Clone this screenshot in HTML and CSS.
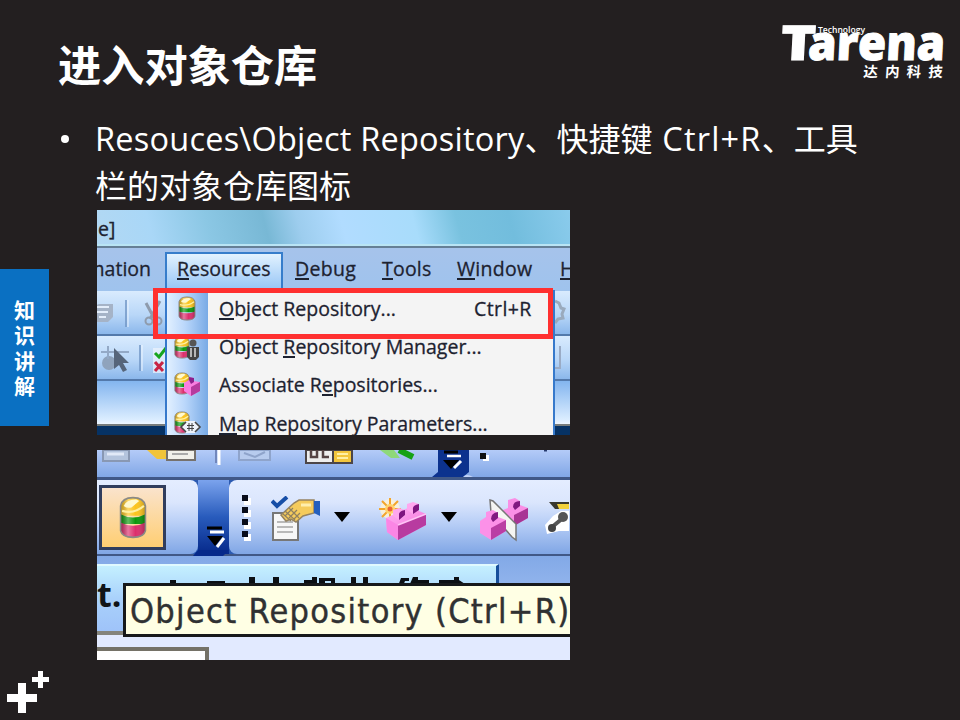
FILE: index.html
```html
<!DOCTYPE html>
<html lang="zh-CN">
<head>
<meta charset="utf-8">
<title>进入对象仓库</title>
<link rel="stylesheet" href="styles.css">
</head>
<body>
<svg class="defs" aria-hidden="true">
  <defs>
    <linearGradient id="shine" x1="0" x2="1" y1="0" y2="0">
      <stop offset="0" stop-color="#000" stop-opacity=".25"/>
      <stop offset=".3" stop-color="#fff" stop-opacity=".35"/>
      <stop offset=".6" stop-color="#fff" stop-opacity="0"/>
      <stop offset="1" stop-color="#000" stop-opacity=".25"/>
    </linearGradient>
    <linearGradient id="pink" x1="0" x2="1" y1="0" y2="1">
      <stop offset="0" stop-color="#ffb0f4"/>
      <stop offset="1" stop-color="#f46fd8"/>
    </linearGradient>
    <symbol id="repo" viewBox="0 0 18 26" preserveAspectRatio="none">
      <path d="M1 6Q2 1 9 1T17 6V12H1z" fill="#fcc41c"/>
      <path d="M1 11Q9 15 17 11V17H1z" fill="#0c980c"/>
      <path d="M1 16Q9 20 17 16V21Q16 25 9 25T1 21z" fill="#dc2e6c"/>
      <path d="M1 6Q2 1 9 1T17 6V21Q16 25 9 25T1 21z" fill="url(#shine)" stroke="#8b8a86" stroke-width="1"/>
      <path d="M3 6Q5 2 11 2L13 3L8 7Q5 7.500 3 6z" fill="#fff9cf"/>
      <path d="M2 9Q10 11 16 6" fill="none" stroke="#fff0a0" stroke-width="1.300"/>
    </symbol>
    <symbol id="brick" viewBox="0 0 42 40">
      <path d="M1 16L25 5L41 12V23L13 38L2 30z" fill="url(#pink)"/>
      <path d="M13 23L41 12V23L13 38z" fill="#b83ba0"/>
      <path d="M1 16L13 23V38L2 30z" fill="#fb86e5"/>
      <path d="M8 14V8L14 6L20 8V14L14 18z" fill="#ffa7ef"/>
      <path d="M14 14Q13 9 20 8V13L14 18z" fill="#7f1680"/>
      <path d="M22 8V2L28 0L34 2V8L28 12z" fill="#ffa7ef"/>
      <path d="M28 8Q27 3 34 2V8L28 12z" fill="#7f1680"/>
      <path d="M13 23L41 12" stroke="#ffc4f6" stroke-width="1.500"/>
    </symbol>
  </defs>
</svg>
<div class="slide">
  <header class="head">
    <h1>进入对象仓库</h1>
    <svg class="logo" viewBox="0 0 170 60" role="img">
      <g transform="translate(7 40) skewX(-3)">
        <text class="logo-name" x="-2" y="0" textLength="35" lengthAdjust="spacingAndGlyphs">T</text>
        <text class="logo-name" x="25.500" y="0" textLength="137" lengthAdjust="spacingAndGlyphs">arena</text>
      </g>
      <text class="logo-tag" x="43" y="12.500" textLength="47" lengthAdjust="spacingAndGlyphs">Technology</text>
      <g transform="translate(88 57) skewX(-4)">
        <text class="logo-cn" x="0" y="0">达内科技</text>
      </g>
    </svg>
  </header>

  <aside class="tag"><span>知</span><span>识</span><span>讲</span><span>解</span></aside>

  <main class="content">
    <ul class="points">
      <li><span class="en">Resouces\Object Repository</span>、快捷键<span class="keys"> Ctrl+R</span>、工具栏的对象仓库图标</li>
    </ul>

    <section class="shot shot-menu">
      <div class="titlebar">e]</div>
      <nav class="menubar">
        <span class="m-auto">mation</span>
        <span class="m-res"><u>R</u>esources</span>
        <span class="m-debug"><u>D</u>ebug</span>
        <span class="m-tools"><u>T</u>ools</span>
        <span class="m-window"><u>W</u>indow</span>
        <span><u>H</u></span>
      </nav>
      <div class="strip">
        <svg width="473" height="44" viewBox="0 0 473 44">
          <path d="M-3 15L2 13H16V26L11 31H-3z" fill="#a5b3c7"/><path d="M0 16H12M0 21H11M2 26H9" stroke="#e4eefb" stroke-width="2"/><path d="M29 9V36" stroke="#6f94c4" stroke-width="1.500"/><path d="M31 9V36" stroke="#eef6ff"/>
          <path d="M49 12L57 27M63 10L53 28" stroke="#8f9bac" stroke-width="3"/><circle cx="52" cy="30" r="3.500" fill="none" stroke="#8f9bac" stroke-width="2"/><circle cx="61" cy="30" r="3.500" fill="none" stroke="#8f9bac" stroke-width="2"/>
          <path d="M458 10l4 2 2 5 3 1-2 5 1 4-5 1-3 4" fill="none" stroke="#9aaabd" stroke-width="3"/>
        </svg>
      </div>
      <div class="strip">
        <svg width="473" height="44" viewBox="0 0 473 44">
          <circle cx="12" cy="27" r="7" fill="#8fa3bc"/><path d="M4 16H32M11 10V23" stroke="#93a9c6" stroke-width="2"/><path d="M17 12V33L22 29L26 36L30 34L26 27H32z" fill="#56657a"/><path d="M43 9V35" stroke="#6f94c4" stroke-width="1.500"/><path d="M45 9V35" stroke="#eef6ff"/>
          <path d="M56 12H70V37H56z" fill="#eef4fc" opacity=".7"/><path d="M58 17L62 21L69 12" fill="none" stroke="#18a51e" stroke-width="3"/><path d="M58 26L66 35M66 26L58 35" stroke="#c82445" stroke-width="3"/><path d="M463 10V32H457" fill="none" stroke="#9aabc5" stroke-width="2"/>
        </svg>
      </div>
      <div class="strip plain"></div>
      <div class="desk"></div>

      <div class="popup">
        <div class="item"><svg class="ic" viewBox="0 0 40 38"><use href="#repo" x="11" y="6" width="18" height="25"/></svg><span><u>O</u>bject Repository...</span><kbd>Ctrl+R</kbd></div>
        <div class="item"><svg class="ic" viewBox="0 0 40 38"><use href="#repo" x="7" y="8" width="16" height="23"/><circle cx="26" cy="15" r="3.500" fill="#555"/><path d="M20 19H32V29L29 32H23L20 29z" fill="#444"/><path d="M24 20V29M28 20V29" stroke="#ddd" stroke-width="1.500"/></svg><span>Object <u>R</u>epository Manager...</span></div>
        <div class="item"><svg class="ic" viewBox="0 0 40 38"><use href="#repo" x="7" y="6" width="16" height="23"/><path d="M17 17L22 14V11L26 12V15L33 16V25L24 30L17 25z" fill="#fa7ee0"/><path d="M24 21L33 16V25L24 30z" fill="#b63b9e"/><path d="M22 14V11L27 12V16L24 18z" fill="#8c218c"/></svg><span>Associate R<u>e</u>positories...</span></div>
        <div class="item"><svg class="ic" viewBox="0 0 40 38"><use href="#repo" x="7" y="6" width="16" height="23"/><path d="M14 22L19 16H28L33 22L28 28H19z" fill="#eef3fa"/><path d="M19 17L14 22L19 27M28 17L33 22L28 27" fill="none" stroke="#444" stroke-width="1.600"/><path d="M22 18V26M25 18V26M20 20.500H27M20 23.500H27" stroke="#444" stroke-width="1"/></svg><span><u>M</u>ap Repository Parameters...</span></div>
      </div>
      <div class="marker"></div>
    </section>

    <section class="shot shot-toolbar">
      <div class="bar-top">
        <svg width="473" height="27" viewBox="0 0 473 27">
          <path d="M6 0H32V11H6z" fill="#b4c4dd" stroke="#8998b3" stroke-width="2"/><path d="M10 4H27" stroke="#e1e9f7" stroke-width="3"/>
          <path d="M50 0H72V9H60z" fill="#f1c43a"/><path d="M70 0H98V10H70z" fill="#f1f0ea" stroke="#76716c" stroke-width="2"/><path d="M75 4H91" stroke="#aaa" stroke-width="2"/>
          <path d="M119 0V13" stroke="#7187bc" stroke-width="2"/><path d="M122 0V15" stroke="#fff" stroke-width="3"/>
          <path d="M142 0H173V10H142z" fill="#b7cbee" stroke="#8fa4cb" stroke-width="2"/><path d="M147 3L158 7L168 2" fill="none" stroke="#8fa4cb" stroke-width="2"/>
          <path d="M209 0H236V13H209z" fill="#eee" stroke="#4c4648" stroke-width="2"/><path d="M214 0V7H220V0M226 0V7H232" stroke="#544" stroke-width="2.500" fill="none"/><path d="M236 0H255V13H236z" fill="#f3c63c" stroke="#4c4648" stroke-width="2"/><path d="M240 4H251M240 8H251" stroke="#fff0a5" stroke-width="2"/>
          <path d="M283 0H297L303 8H294z" fill="#8ed879"/><path d="M302 0L316 7" stroke="#16a216" stroke-width="6"/>
          <path d="M341 0H372V22L366 27H335L341 22z" fill="#0c328e"/><path d="M347 2H361" stroke="#000" stroke-width="3"/><path d="M350 6H364" stroke="#fff" stroke-width="2.500"/><path d="M346 10H362L354 19z"/><path d="M357 18L364 11" stroke="#fff" stroke-width="3"/><path d="M365 29Q368 22 376 27z" fill="#c2d3f8"/>
          <path d="M386 5h6v6h-6z" fill="#fff"/><path d="M383 3h6v6h-6z" fill="#111"/><path d="M447 0H450" stroke="#263b70" stroke-width="3"/>
        </svg>
      </div>
      <div class="bar-main">
        <div class="group first"><span class="pressed"><svg width="28" height="43"><use href="#repo" width="28" height="43"/></svg></span></div>
        <div class="overflow"><svg width="31" height="76" viewBox="0 0 31 76"><path d="M9 48H24" stroke="#000" stroke-width="3"/><path d="M12 52H26" stroke="#fff" stroke-width="3"/><path d="M9 56H25L17 66z"/><path d="M19 67L26 58" stroke="#fff" stroke-width="3"/><path d="M-5 76L0 70H31L25 76z" fill="#06298a"/></svg></div>
        <div class="group rest">
          <svg class="grip" width="12" height="48" viewBox="0 0 12 48"><path d="M3 3h7v7H3zM3 15h7v7H3zM3 27h7v7H3zM3 39h7v7H3z" fill="#fff"/><path d="M1 0h6v6H1zM1 12h6v6H1zM1 24h6v6H1zM1 36h6v6H1z" fill="#080c1a"/></svg>
          <svg class="props" width="50" height="46" viewBox="0 0 50 46"><path d="M2 17H27V44H2z" fill="#f7f7f7" stroke="#777" stroke-width="2"/><path d="M6 26H22M6 31H22M6 36H22" stroke="#a5a5a5" stroke-width="1.500"/><path d="M10 19L23 7L28 4H43V17L32 20L25 26L20 23L15 25z" fill="#f5cb5c" stroke="#958361" stroke-width="1.500"/><path d="M12 18L20 25M14 15L24 24M18 12L28 22M14 20L22 12M18 22L26 14M23 23L29 17" stroke="#8f8060" stroke-width="1.200"/><path d="M30 9H40" stroke="#ffeeaf" stroke-width="3"/><path d="M43 5H49V20L43 17z" fill="#245fbd"/><path d="M1 5L6 10L16 1" fill="none" stroke="#164ea7" stroke-width="4"/></svg>
          <svg class="arrow" width="16" height="10" viewBox="0 0 16 10"><path d="M0 0H16L8 10z"/></svg>
          <svg class="newbrick" width="50" height="46" viewBox="0 0 50 46"><circle cx="12" cy="12" r="10" fill="#fff4d5" opacity=".8"/><g stroke="#f3a52c" stroke-width="2"><path d="M12 1V23M1 12H23M4 4L20 20M20 4L4 20"/></g><circle cx="12" cy="12" r="5" fill="#ffd36b"/><circle cx="12" cy="12" r="2.500" fill="#ec6634"/><use href="#brick" x="7" y="5" width="42" height="40"/></svg>
          <svg class="arrow" width="16" height="10" viewBox="0 0 16 10"><path d="M0 0H16L8 10z"/></svg>
          <svg class="split" width="50" height="46" viewBox="0 0 50 46"><path d="M24 13L29 11V3L36 1L41 4V8L49 11V21L34 29L24 22z" fill="#fa8fe6"/><path d="M35 18L49 11V21L35 29z" fill="#a83494"/><path d="M34 10Q34 4 41 4V9L36 13z" fill="#811880"/><path d="M11 3L14 4L37 27V43L33 40L12 16z" fill="#f5f5f2" stroke="#777" stroke-width="1.500"/><path d="M1 24L7 20V15L14 13L19 16V20L27 23V34L12 43L1 36z" fill="#fc91e8"/><path d="M12 31L27 23V34L12 43z" fill="#ba3ea4"/><path d="M12 22Q12 16 19 15V21L14 25z" fill="#811880"/></svg>
          <svg class="keytool" width="24" height="36" viewBox="0 0 24 36"><path d="M4 1H24V8H10z" fill="#39382e"/><path d="M12 3H24V8H14z" fill="#f2d13d"/><path d="M0 24L8 15L16 10H24V30H14L2 33z" fill="#fff"/><path d="M7 26L18 17" stroke="#555" stroke-width="4"/><circle cx="7" cy="27" r="4" fill="#444"/><circle cx="18" cy="16" r="5" fill="#555"/></svg>
        </div>
      </div>
      <div class="tabs">
        <div class="tab"><b>t.</b><svg class="hidden-label" width="320" height="9" viewBox="0 0 320 9"><path d="M20 3h6v3h-6zM57 4h18v5H57zM99 0h6v9h-6zM123 0h6v9h-6zM154 3h8V0h5v9h-13zM169 1h16v8h-4V4h-6v5h-6zM201 0h5v9h-5zM213 0h5v9h-5zM220 6h7v3h-7zM251 1h8v3h-4l-2 5h-5zM263 0h5v3h11v4h-16v2h-4zM289 3h20l9 6h-8l-4-3h-17zM304 0h5v5h-5z" fill="#0b0f14"/></svg></div>
      </div>
      <div class="pane"><div class="field"></div></div>
      <div class="tooltip">Object Repository (Ctrl+R)</div>
    </section>
  </main>

  <svg class="plus" width="44" height="44" viewBox="0 0 44 44"><path d="M11 12h8v11h11v8H19v11h-8V31H0v-8h11zM31 0h5v6h6v5h-6v6h-5v-6h-6V6h6z" fill="#fff"/></svg>
</div>
</body>
</html>
```
FILE: styles.css
```css
* { box-sizing: border-box; }
body { margin: 0; background: #231f20; }
.defs { position: absolute; width: 0; height: 0; }
svg { display: block; flex: none; }

.slide {
  position: relative;
  width: 960px;
  height: 720px;
  overflow: hidden;
  background: #231f20;
  color: #fff;
  font-family: "Open Sans", "Noto Sans CJK SC", sans-serif;
}

.head {
  display: flex;
  justify-content: space-between;
  height: 115px;
  padding: 20px 15px 0 58px;
}
h1 {
  margin: 12px 0 0;
  font: 700 43.200px/62px "Noto Sans CJK SC", sans-serif;
}
.logo { width: 170px; height: 60px; overflow: visible; }
.logo text { fill: #fff; }
.logo-name { font: 800 48px "Open Sans", sans-serif; stroke: #fff; stroke-width: 1px; }
.logo-tag { font: 600 9px "Open Sans", sans-serif; }
.logo-cn { font: 700 14.500px "Noto Sans CJK SC", sans-serif; letter-spacing: 7.200px; }

.tag {
  position: absolute;
  left: 0;
  top: 269px;
  width: 49px;
  height: 157px;
  display: flex;
  flex-direction: column;
  align-items: center;
  justify-content: center;
  background: #0a70c2;
  font: 700 21px/25.500px "Noto Sans CJK SC", sans-serif;
}

.content { padding-left: 97px; width: 900px; }
.points {
  margin: 0 0 0 -2px;
  padding: 0;
  height: 95px;
  list-style: none;
  font-size: 32px;
  line-height: 47px;
}
.points li { position: relative; width: 775px; }
.points li::before {
  content: "";
  position: absolute;
  left: -34px;
  top: 20px;
  width: 8px;
  height: 8px;
  border-radius: 50%;
  background: #fff;
}
.en { font-size: 32.500px; letter-spacing: .22px; }
.keys { font-size: 32.500px; letter-spacing: 1.200px; }

.shot { position: relative; width: 473px; overflow: hidden; color: #1d2230; }
.shot svg { filter: blur(.5px); }

.shot-menu {
  height: 225px;
  margin-bottom: 15px;
  font-size: 19.500px;
  letter-spacing: 0;
  -webkit-text-stroke: .3px #1d2230;
}
u { text-decoration: none; border-bottom: 2px solid currentColor; display: inline-block; line-height: 19px; }
.titlebar {
  height: 38px;
  padding-left: 1px;
  line-height: 38px;
  border-bottom: 2px solid #657f96;
  box-shadow: inset 0 -2px #b9e4f4;
  background: linear-gradient(75deg, #b2d8f3 0, #a9d7f7 12%, #8bc7e4 24%, #78b8d5 36%, #9dcdee 43%, #b1dcff 52%, #a8dcfb 67%, #79c2df 76%, #72bddd 87%, #8acbec 100%);
}
.menubar {
  display: flex;
  align-items: stretch;
  height: 43px;
  line-height: 42px;
  background: linear-gradient(#a6c3eb, #9fc3ed);
}
.menubar span { flex: none; }
.m-auto { width: 68px; direction: rtl; padding-right: 14px; overflow: hidden; white-space: nowrap; }
.m-res {
  width: 118px;
  margin: 4px 12px 0 0;
  padding-left: 10px;
  line-height: 30px;
  border: 2px solid #367dcb;
  border-bottom: 0;
  background: linear-gradient(#e2f2ff, #93c3f5);
}
.m-debug { width: 87px; letter-spacing: .3px; }
.m-tools { width: 75px; letter-spacing: .2px; }
.m-window { width: 103px; letter-spacing: .3px; }
.strip {
  height: 45px;
  border-bottom: 2px solid #5379ab;
  background: linear-gradient(#d9ebfe, #b9d7f8 55%, #8bb7eb);
}
.strip.plain { border-color: #777c7c; background: linear-gradient(#83b5ef, #dbedff 90%, #eef6ff); }
.desk { height: 9px; background: #063264; }

.popup {
  position: absolute;
  left: 68px;
  top: 80px;
  width: 390px;
  height: 170px;
  border: solid #3679cb;
  border-width: 0 2px;
  background: linear-gradient(90deg, #e2f0ff 0, #bad7fb 18px, #78aae5 41px, #f4f4f4 41px);
}
.item { display: flex; height: 38.200px; line-height: 38px; white-space: nowrap; }
.ic { width: 40px; height: 38px; margin-right: 12px; }
.item kbd { font: inherit; margin-left: 78px; letter-spacing: .4px; }
.marker {
  position: absolute;
  left: 56px;
  top: 78px;
  width: 400px;
  height: 51px;
  border: 5px solid #ff3030;
}

.shot-toolbar { height: 210px; background: #8fb2ea; }
.bar-top { height: 30px; border-bottom: 3px solid #405887; background: linear-gradient(#b4cbf8, #81a7e6); }
.bar-main { display: flex; height: 76px; border-bottom: 2px solid #405887; background: #2b5ab1; }
.group { display: flex; background: linear-gradient(#e4edff 0, #dbe6fd 30%, #b6cdf6 60%, #80a6e5 100%); }
.first { width: 101px; padding: 5px 0 0 2px; border-radius: 0 8px 8px 0; }
.pressed {
  display: grid;
  place-items: center;
  width: 67px;
  height: 65px;
  border: 3px solid #303d5d;
  background: linear-gradient(#fae3cc, #ffce72);
}
.overflow { width: 31px; background: linear-gradient(#7ba3ed, #285bbc 50%, #06298a); }
.overflow svg { overflow: visible; }
.rest { flex: 1; border-radius: 8px 0 0 8px; padding-left: 12px; }
.grip { margin-top: 15px; }
.props { margin: 16px 13px 0 18px; }
.arrow { margin-top: 32px; }
.newbrick { margin: 17px 13px 0 28px; }
.split { margin: 17px 16px 0 22px; }
.keytool { margin-top: 21px; }
.tabs { height: 79px; padding-top: 8px; background: linear-gradient(#82a9e7, #a8c4f4); border-bottom: 4px solid #85847b; }
.tab {
  display: flex;
  width: 402px;
  height: 67px;
  border-top: 2px solid #e0faff;
  border-right: 3px solid #164e9b;
  background: linear-gradient(#c4f0ff, #a9d1fb 50%, #9fc3f9);
}
.tab b { width: 53px; color: #101418; font: 700 34px/57px "Open Sans", sans-serif; }
.hidden-label { margin-top: 11px; }
.pane { height: 25px; padding-top: 12px; background: #e2eaff; }
.field { width: 112px; height: 20px; border: solid #757267; border-width: 4px 4px 0 0; background: #fff; }
.tooltip {
  position: absolute;
  left: 26px;
  top: 133px;
  width: 460px;
  height: 54px;
  padding-left: 4px;
  border: 3px solid #17191b;
  background: #ffffe4;
  color: #303132;
  font: 34px/50px "DejaVu Sans Condensed", "DejaVu Sans", sans-serif;
  letter-spacing: 1.300px;
  white-space: nowrap;
  -webkit-text-stroke: .4px #303132;
}

.plus { position: absolute; left: 7px; top: 671px; }
```
